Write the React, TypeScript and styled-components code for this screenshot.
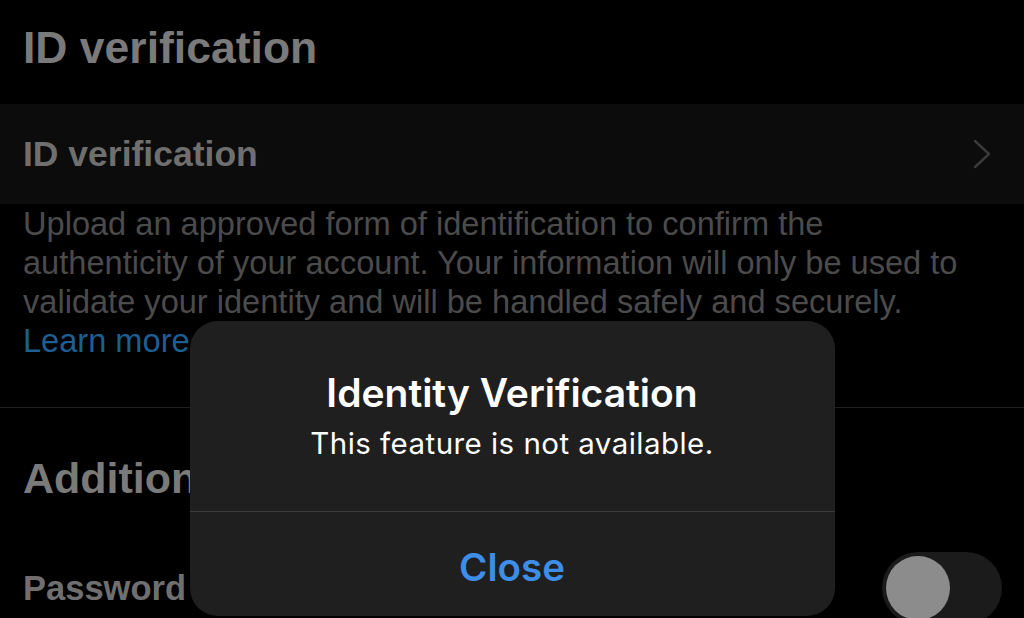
import React from 'react';
import styled, { createGlobalStyle } from 'styled-components';

const GlobalStyle = createGlobalStyle`
  html, body {
    margin: 0;
    padding: 0;
    background: #000;
  }

  body {
    width: 1024px;
    height: 618px;
    overflow: hidden;
    font-family: "Liberation Sans", Arial, sans-serif;
  }
`;

type SectionProps = {
  title: string,
}

const Settings: React.FC = () => (
  <Page>
    <Heading>ID verification</Heading>
    <NavRow>
      <RowLabel>ID verification</RowLabel>
      <Chevron width="20" height="30" viewBox="0 0 20 30">
        <path d="M3 2 L17 15 L3 28" />
      </Chevron>
    </NavRow>
    <Description>
      Upload an approved form of identification to confirm the authenticity of your account.
      Your information will only be used to validate your identity and will be handled safely
      and securely.
      <br />
      <LearnMore>Learn more</LearnMore>
    </Description>
    <Divider />
    <Section title="Additional password protection" />
  </Page>
);

const Section: React.FC<SectionProps> = ({ title }) => (
  <>
    <SectionHeading>{title}</SectionHeading>
    <ToggleRow>
      <ToggleLabel>Password reset protect</ToggleLabel>
      <Switch>
        <Knob />
      </Switch>
    </ToggleRow>
  </>
);

const Alert: React.FC = () => (
  <Overlay>
    <AlertBox>
      <AlertBody>
        <AlertTitle>Identity Verification</AlertTitle>
        <AlertMessage>This feature is not available.</AlertMessage>
      </AlertBody>
      <AlertButton>Close</AlertButton>
    </AlertBox>
  </Overlay>
);

export default function App() {
  return (
    <>
      <GlobalStyle />
      <Screen>
        <Settings />
        <Alert />
      </Screen>
    </>
  );
}

const Screen = styled.div`
  position: relative;
  width: 1024px;
  height: 618px;
  overflow: hidden;
  background: #000;
`;

const Page = styled.div`
  display: flex;
  flex-direction: column;
`;

const Heading = styled.div`
  box-sizing: border-box;
  height: 104px;
  padding: 22px 23px 0;
  font-size: 44.5px;
  line-height: 52px;
  font-weight: 700;
  color: #7a7a7a;
`;

const NavRow = styled.div`
  box-sizing: border-box;
  height: 100px;
  padding: 0 32px 0 23px;
  display: flex;
  align-items: center;
  justify-content: space-between;
  background: #0c0c0c;
`;

const RowLabel = styled.div`
  font-size: 35.5px;
  font-weight: 700;
  color: #6f6f6f;
`;

const Chevron = styled.svg`
  fill: none;
  stroke: #3a3a3a;
  stroke-width: 2.4;
  stroke-linecap: round;
  stroke-linejoin: round;
`;

const Description = styled.div`
  max-width: 952px;
  padding: 0 23px;
  font-size: 32.6px;
  line-height: 39px;
  color: #4b4b4b;
`;

const LearnMore = styled.span`
  color: #1c5f93;
`;

const Divider = styled.div`
  height: 1px;
  margin-top: 47px;
  background: #1f1f1f;
`;

const SectionHeading = styled.div`
  padding: 44px 23px 0;
  font-size: 43px;
  line-height: 52px;
  font-weight: 700;
  color: #7a7a7a;
  white-space: nowrap;
`;

const ToggleRow = styled.div`
  display: flex;
  align-items: center;
  justify-content: space-between;
  padding: 48px 22px 0 23px;
`;

const ToggleLabel = styled.div`
  font-size: 34.5px;
  font-weight: 700;
  color: #6f6f6f;
  white-space: nowrap;
`;

const Switch = styled.div`
  box-sizing: border-box;
  width: 120px;
  height: 72px;
  padding: 4px;
  border-radius: 36px;
  background: #1b1b1c;
  display: flex;
  align-items: center;
`;

const Knob = styled.div`
  width: 64px;
  height: 64px;
  border-radius: 50%;
  background: #8c8c8c;
`;

const Overlay = styled.div`
  position: absolute;
  top: 321px;
  left: 0;
  right: 0;
  display: flex;
  justify-content: center;
`;

const AlertBox = styled.div`
  width: 645px;
  height: 295px;
  border-radius: 28px;
  background: #1f1f1f;
  display: flex;
  flex-direction: column;
  overflow: hidden;
  font-family: Inter, "Liberation Sans", sans-serif;
  color: #fff;
`;

const AlertBody = styled.div`
  box-sizing: border-box;
  height: 191px;
  padding-top: 48px;
  display: flex;
  flex-direction: column;
  align-items: center;
  border-bottom: 1px solid #3c3c3c;
`;

const AlertTitle = styled.div`
  font-size: 39px;
  line-height: 48px;
  font-weight: 600;
`;

const AlertMessage = styled.div`
  margin-top: 8px;
  font-size: 29.5px;
  line-height: 36px;
  font-weight: 400;
  letter-spacing: 0.45px;
`;

const AlertButton = styled.div`
  flex: 1;
  display: flex;
  align-items: center;
  justify-content: center;
  padding-top: 6px;
  font-size: 38.5px;
  font-weight: 600;
  color: #3e8de6;
`;
